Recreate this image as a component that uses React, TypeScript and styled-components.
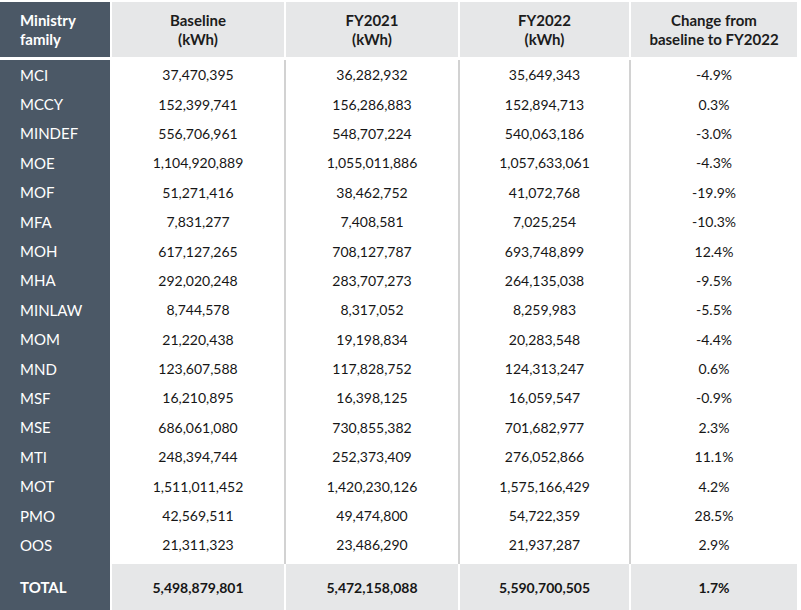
import React from "react";
import styled, { createGlobalStyle } from "styled-components";

const Global = createGlobalStyle`
  html, body { margin: 0; padding: 0; background: #ffffff; }
  body { font-family: Lato, "Open Sans", "Liberation Sans", sans-serif; }
`;

const COLS = "112px 174px 174px 171px 166px";
const DARK = "#4b5866";
const GREY = "#e6e7e8";
const RULE = "#d2d2d2";

const Table = styled.div`
  width: 797px;
  margin-top: 2px;
  display: flex;
  flex-direction: column;
`;

const HeadRow = styled.div`
  display: grid;
  grid-template-columns: ${COLS};
  height: 55px;
  margin-bottom: 3px;
`;

const HeadLabel = styled.div`
  background: ${DARK};
  border-right: 2px solid #fff;
  color: #fff;
  font-weight: 700;
  font-size: 15px;
  line-height: 19px;
  padding-left: 20px;
  display: flex;
  align-items: center;
`;

const HeadCell = styled.div<{ $end?: boolean }>`
  background: ${GREY};
  border-right: ${(p) => (p.$end ? "none" : "2px solid #fff")};
  color: #1c1c1c;
  font-weight: 700;
  font-size: 15px;
  line-height: 19px;
  text-align: center;
  display: flex;
  align-items: center;
  justify-content: center;
`;

const Row = styled.div<{ $last?: boolean }>`
  display: grid;
  grid-template-columns: ${COLS};
  height: ${(p) => (p.$last ? "34px" : "29.4px")};
`;

const Label = styled.div<{ $last?: boolean }>`
  background: ${DARK};
  border-right: 2px solid #fff;
  color: #fff;
  font-size: 15px;
  padding-left: 20px;
  padding-bottom: ${(p) => (p.$last ? "4.6px" : "0")};
  display: flex;
  align-items: center;
`;

const Cell = styled.div<{ $end?: boolean; $last?: boolean }>`
  border-right: ${(p) => (p.$end ? "none" : `2px solid ${RULE}`)};
  color: #161616;
  font-size: 14px;
  padding-bottom: ${(p) => (p.$last ? "4.6px" : "0")};
  display: flex;
  align-items: center;
  justify-content: center;
`;

const TotalRow = styled.div`
  display: grid;
  grid-template-columns: ${COLS};
  height: 46px;
`;

const TotalLabel = styled.div`
  background: ${DARK};
  border-right: 2px solid #fff;
  color: #fff;
  font-weight: 700;
  font-size: 15px;
  padding-left: 20px;
  display: flex;
  align-items: center;
`;

const TotalCell = styled.div<{ $end?: boolean }>`
  background: ${GREY};
  border-right: ${(p) => (p.$end ? "none" : "2px solid #fff")};
  color: #161616;
  font-weight: 700;
  font-size: 14px;
  display: flex;
  align-items: center;
  justify-content: center;
`;

const data: [string, string, string, string, string][] = [
  ["MCI", "37,470,395", "36,282,932", "35,649,343", "-4.9%"],
  ["MCCY", "152,399,741", "156,286,883", "152,894,713", "0.3%"],
  ["MINDEF", "556,706,961", "548,707,224", "540,063,186", "-3.0%"],
  ["MOE", "1,104,920,889", "1,055,011,886", "1,057,633,061", "-4.3%"],
  ["MOF", "51,271,416", "38,462,752", "41,072,768", "-19.9%"],
  ["MFA", "7,831,277", "7,408,581", "7,025,254", "-10.3%"],
  ["MOH", "617,127,265", "708,127,787", "693,748,899", "12.4%"],
  ["MHA", "292,020,248", "283,707,273", "264,135,038", "-9.5%"],
  ["MINLAW", "8,744,578", "8,317,052", "8,259,983", "-5.5%"],
  ["MOM", "21,220,438", "19,198,834", "20,283,548", "-4.4%"],
  ["MND", "123,607,588", "117,828,752", "124,313,247", "0.6%"],
  ["MSF", "16,210,895", "16,398,125", "16,059,547", "-0.9%"],
  ["MSE", "686,061,080", "730,855,382", "701,682,977", "2.3%"],
  ["MTI", "248,394,744", "252,373,409", "276,052,866", "11.1%"],
  ["MOT", "1,511,011,452", "1,420,230,126", "1,575,166,429", "4.2%"],
  ["PMO", "42,569,511", "49,474,800", "54,722,359", "28.5%"],
  ["OOS", "21,311,323", "23,486,290", "21,937,287", "2.9%"],
];

export default function App() {
  return (
    <>
      <Global />
      <Table>
        <HeadRow>
          <HeadLabel>
            Ministry
            <br />
            family
          </HeadLabel>
          <HeadCell>
            Baseline
            <br />
            (kWh)
          </HeadCell>
          <HeadCell>
            FY2021
            <br />
            (kWh)
          </HeadCell>
          <HeadCell>
            FY2022
            <br />
            (kWh)
          </HeadCell>
          <HeadCell $end>
            Change from
            <br />
            baseline to FY2022
          </HeadCell>
        </HeadRow>
        {data.map((r, i) => {
          const last = i === data.length - 1;
          return (
            <Row key={r[0]} $last={last}>
              <Label $last={last}>{r[0]}</Label>
              <Cell $last={last}>{r[1]}</Cell>
              <Cell $last={last}>{r[2]}</Cell>
              <Cell $last={last}>{r[3]}</Cell>
              <Cell $last={last} $end>
                {r[4]}
              </Cell>
            </Row>
          );
        })}
        <TotalRow>
          <TotalLabel>TOTAL</TotalLabel>
          <TotalCell>5,498,879,801</TotalCell>
          <TotalCell>5,472,158,088</TotalCell>
          <TotalCell>5,590,700,505</TotalCell>
          <TotalCell $end>1.7%</TotalCell>
        </TotalRow>
      </Table>
    </>
  );
}
